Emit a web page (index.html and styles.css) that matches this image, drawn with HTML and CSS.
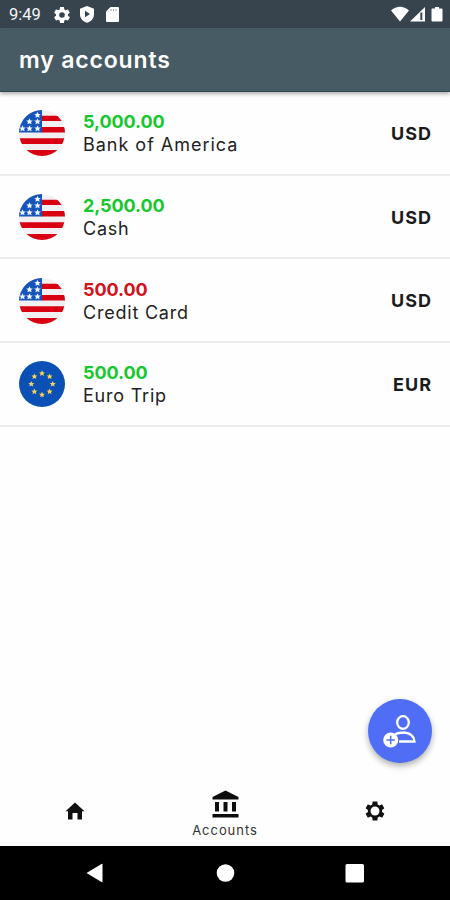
FILE: index.html
```html
<!DOCTYPE html>
<html lang="en">
<head>
<meta charset="utf-8">
<title>my accounts</title>
<link rel="stylesheet" href="styles.css">
</head>
<body>
<svg class="defs" width="0" height="0" aria-hidden="true">
  <defs>
    <path id="gear" d="M19.4 13a7.500 7.500 0 0 0 0-2l2.100-1.600c.2-.2.2-.4.1-.6l-2-3.500c-.1-.2-.4-.3-.6-.2l-2.500 1a7 7 0 0 0-1.700-1L14.500 2.400c0-.2-.2-.4-.5-.4h-4c-.3 0-.5.2-.5.4l-.4 2.700a7 7 0 0 0-1.700 1l-2.500-1c-.2-.1-.5 0-.6.2l-2 3.500c-.1.2-.1.5.1.600L4.600 11a7.500 7.500 0 0 0 0 2l-2.200 1.600c-.2.2-.2.4-.1.600l2 3.500c.1.2.4.3.600.2l2.500-1a7 7 0 0 0 1.700 1l.4 2.700c0 .2.2.4.5.4h4c.3 0 .5-.2.500-.4l.4-2.700a7 7 0 0 0 1.700-1l2.500 1c.2.1.5 0 .600-.2l2-3.500c.1-.2.1-.5-.1-.600z"/>
    <path id="star" d="M0-3 .9-1 3-.9 1.400.5 1.900 2.600 0 1.500-1.900 2.600-1.400.5-3-.9-.9-1z"/>
    <clipPath id="disc"><circle cx="23" cy="23" r="23"/></clipPath>
    <symbol id="us" viewBox="0 0 46 46">
      <g clip-path="url(#disc)">
        <path fill="#f0f0f2" d="M0 0h46v46H0z"/>
        <path fill="#d80011" d="M22 5.700h24V11H22zM22 17h24v5.500H22zM0 28.300h46V34H0zM0 40h46v6H0z"/>
        <path fill="#1554bb" d="M0 0h23v22.500H0z"/>
        <g fill="#f4f6fb">
          <use href="#star" transform="translate(18.500 5) scale(1.100)"/><use href="#star" transform="translate(10.500 11.500) scale(1.100)"/>
          <use href="#star" transform="translate(18.500 11.500) scale(1.100)"/><use href="#star" transform="translate(3.500 18.500) scale(1.100)"/>
          <use href="#star" transform="translate(10.500 18.500) scale(1.100)"/><use href="#star" transform="translate(18.500 18.500) scale(1.100)"/>
        </g>
      </g>
    </symbol>
    <symbol id="eu" viewBox="0 0 46 46">
      <circle cx="23" cy="23" r="23" fill="#0b50b5"/>
      <g fill="#f3d45c">
        <use href="#star" transform="translate(23 12.300)"/><use href="#star" transform="translate(30.600 15.400)"/>
        <use href="#star" transform="translate(33.700 23)"/><use href="#star" transform="translate(30.600 30.600)"/>
        <use href="#star" transform="translate(23 33.700)"/><use href="#star" transform="translate(15.400 30.600)"/>
        <use href="#star" transform="translate(12.300 23)"/><use href="#star" transform="translate(15.400 15.400)"/>
      </g>
    </symbol>
  </defs>
</svg>
<div class="screen">
  <div class="status">
    <span class="clock">9:49</span>
    <svg class="s-gear" viewBox="2 2 20 20"><use href="#gear" fill="#fff"/><circle cx="12" cy="12" r="3.500" fill="#37444e"/></svg>
    <svg class="s-shield" viewBox="0 0 14 17"><path fill="#fff" d="M7 0l7 2.700v5.500c0 4-3 7.500-7 8.600-4-1.100-7-4.600-7-8.600V2.700z"/><path fill="#37444e" d="M5 4.800l5 3.200-5 3.200z"/></svg>
    <svg class="s-card" viewBox="0 0 13 15"><path fill="#fff" d="M4.500 0H12a1 1 0 0 1 1 1v13a1 1 0 0 1-1 1H1a1 1 0 0 1-1-1V4.500z"/><path stroke="#8b949a" stroke-width=".8" d="M5 2v2.200M7.500 2v2.200M10 2v2.200"/></svg>
    <svg class="s-right" viewBox="0 0 54 17"><path fill="#fff" d="M0 4.500Q9 -3 18 4.500L9 15.500zM19 15.500L34 1v14.500z"/><path fill="#37444e" d="M29.300 6.500h2v7.500h-2z"/><path fill="#fff" d="M44 1h4v1.500h2.500q1 0 1 1V14.500q0 1-1 1h-9q-1 0-1-1V3.500q0-1 1-1H44z"/></svg>
  </div>
  <header class="bar"><h1 class="title">my accounts</h1></header>
  <main class="list">
    <div class="row">
      <svg class="flag"><use href="#us"/></svg>
      <div class="info"><span class="amount">5,000.00</span><span class="name wide">Bank of America</span></div>
      <span class="cur">USD</span>
    </div>
    <div class="row">
      <svg class="flag"><use href="#us"/></svg>
      <div class="info"><span class="amount">2,500.00</span><span class="name">Cash</span></div>
      <span class="cur">USD</span>
    </div>
    <div class="row">
      <svg class="flag"><use href="#us"/></svg>
      <div class="info"><span class="amount debt">500.00</span><span class="name">Credit Card</span></div>
      <span class="cur">USD</span>
    </div>
    <div class="row">
      <svg class="flag"><use href="#eu"/></svg>
      <div class="info"><span class="amount">500.00</span><span class="name">Euro Trip</span></div>
      <span class="cur">EUR</span>
    </div>
  </main>
  <div class="fab">
    <svg viewBox="0 0 64 64" width="64" height="64" fill="none" stroke="#fff" stroke-width="2.300">
      <ellipse cx="35" cy="23.500" rx="5.800" ry="6.300"/>
      <path d="M27 35.500Q30 33.500 36 33.500Q46 34.500 46.500 42.500H31"/>
      <circle cx="22.700" cy="41" r="7.500" fill="#fff" stroke="none"/>
      <path stroke="#4f6df5" stroke-width="1.500" d="M18.500 41h8.400M22.700 36.800v8.400"/>
    </svg>
  </div>
  <nav class="tabs">
    <div class="tab"><svg width="20" height="18" viewBox="0 0 20 18"><path fill="#111" d="M10 .5l9.500 8.700H17V17.500h-4.500v-6.500h-5v6.500H3V9.200H.5z"/></svg></div>
    <div class="tab active">
      <svg width="28" height="28" viewBox="0 0 28 28"><path fill="#0d0d0d" d="M14.500 .5L27.500 7v2.500h-26V7zM4 12h4v9.500h-4zM12.500 12h4v9.500h-4zM21 12h4v9.500h-4zM1.500 24h26v3.500h-26z"/></svg>
      <span class="tab-label">Accounts</span>
    </div>
    <div class="tab"><svg width="20" height="20" viewBox="1.500 1.500 21 21"><use href="#gear" fill="#111"/><circle cx="12" cy="12" r="4.700" fill="#fff"/></svg></div>
  </nav>
  <div class="sysnav">
    <svg width="450" height="54" viewBox="0 0 450 54" fill="#fff"><path d="M86.500 27L101.500 18q1-.5 1 .5v17q0 1-1 .5z"/><circle cx="225.500" cy="27" r="8.800"/><rect x="345.500" y="18" width="18.500" height="18.500" rx="1.500"/></svg>
  </div>
</div>
</body>
</html>
```
FILE: styles.css
```css
body { margin: 0; background: #fff; font-family: Inter, "Liberation Sans", sans-serif; }
.defs { position: absolute; }
.screen { position: relative; width: 450px; height: 900px; display: flex; flex-direction: column; overflow: hidden; background: #fefefe; }
.status { height: 28px; flex: none; box-sizing: border-box; padding: 1px 8px 0 9px; display: flex; align-items: center; background: #37444e; }
.clock { width: 44px; font: 16.500px/27px Roboto, sans-serif; color: #f3f6f8; }
.s-gear { width: 16px; height: 16px; margin-left: 0.500px; }
.s-shield { width: 14px; height: 17px; margin-left: 10.500px; }
.s-card { width: 13px; height: 15px; margin-left: 12px; }
.s-right { width: 54px; height: 17px; margin-left: auto; margin-right: -3px; }
.bar { height: 64px; flex: none; box-sizing: border-box; padding: 0 19px; display: flex; align-items: center; background: #465b63; border-bottom: 1px solid #31484f; box-shadow: 0 2px 4px rgba(0, 0, 0, 0.32); z-index: 1; }
.title { margin: 0; font-size: 23px; line-height: 28px; font-weight: 600; color: #fff; letter-spacing: 0.850px; }
.row { height: 83.700px; box-sizing: border-box; padding: 1px 19px 0; display: flex; align-items: center; border-bottom: 2px solid #ececee; }
.flag { width: 46px; height: 46px; flex: none; }
.info { margin-left: 18px; display: flex; flex-direction: column; }
.amount { font-size: 18px; line-height: 23px; font-weight: 700; color: #16c72e; letter-spacing: -0.080px; }
.debt { color: #d0121b; }
.name { font-size: 18px; line-height: 23px; color: #222; white-space: nowrap; letter-spacing: 0.780px; }
.wide { letter-spacing: 0.980px; }
.cur { margin-left: auto; margin-right: -1px; font-size: 18px; font-weight: 700; color: #1b1b1b; letter-spacing: 1px; }
.fab { position: absolute; left: 368px; top: 699px; width: 64px; height: 64px; border-radius: 50%; background: #4f6df5; box-shadow: 0 3px 6px rgba(0, 0, 0, 0.32); }
.tabs { margin-top: auto; height: 70px; flex: none; display: grid; grid-template-columns: repeat(3, 1fr); }
.tab { display: flex; flex-direction: column; align-items: center; justify-content: center; }
.active { justify-content: flex-start; padding-top: 14px; }
.tab-label { margin-top: 3px; font-size: 13px; line-height: 18px; color: #333; letter-spacing: 0.950px; }
.sysnav { height: 54px; flex: none; background: #000; }
```
